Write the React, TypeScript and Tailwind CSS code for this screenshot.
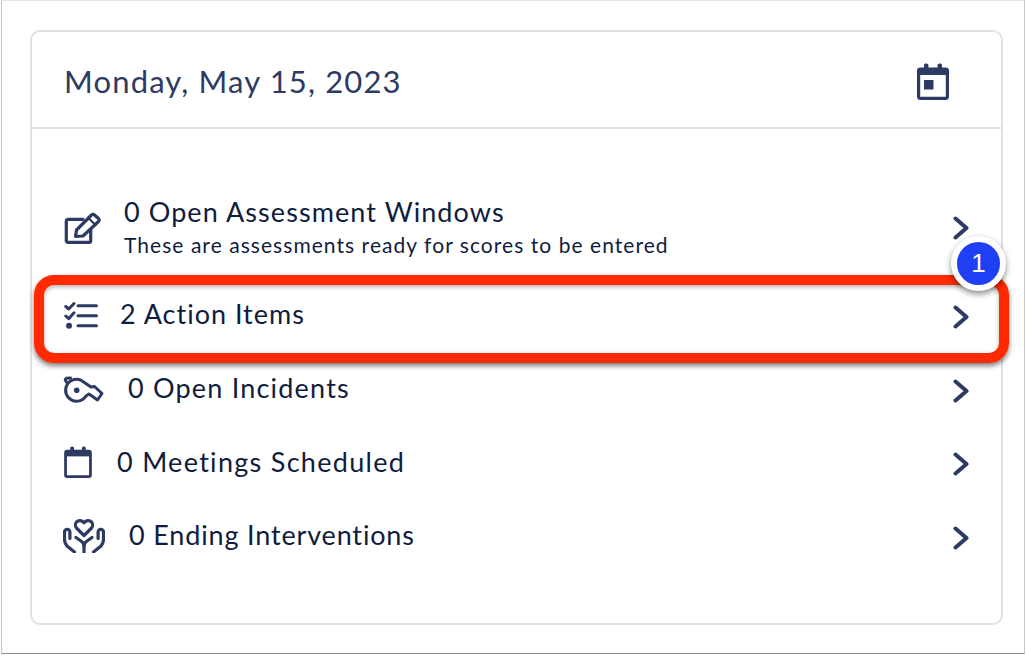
import React from 'react';

const NAVY = '#2d3a63';

function EditIcon() {
  return (
    <svg width="38" height="35" viewBox="7 5 38 35" fill="none" stroke={NAVY} strokeWidth="3.200" strokeLinejoin="round" strokeLinecap="round">
      <path d="M26 13.300H11a1.700 1.700 0 0 0-1.700 1.700V34.700a1.700 1.700 0 0 0 1.700 1.700H32a1.700 1.700 0 0 0 1.700-1.700V24" />
      <path d="M18.500 30.500 19.500 24 34.500 9a2 2 0 0 1 3 0L41.500 12.500a2 2 0 0 1 0 3L26 30z" />
      <path d="M31.500 12 38.500 19" strokeWidth="2.200" />
    </svg>
  );
}

function TasksIcon() {
  return (
    <svg width="34" height="28" viewBox="7 6 34 28" fill="none" stroke={NAVY} strokeWidth="3" strokeLinecap="round" strokeLinejoin="round">
      <path d="M8.800 11.500 11.700 14 17 8.500" />
      <path d="M8.800 21 11.700 23.700 17 17.800" />
      <circle cx="12" cy="30.700" r="3" fill={NAVY} stroke="none" />
      <path d="M21 10.700H39.500M21 20.700H39.500M21 30.700H39.500" />
    </svg>
  );
}

function WhistleIcon() {
  return (
    <svg width="42" height="30" viewBox="7 3 42 30" fill="none" stroke={NAVY} strokeWidth="3" strokeLinejoin="round" strokeLinecap="round">
      <path d="M30 25A11 11 0 1 1 25 9.200L35 16 38.500 15.500 46 22.500 41.500 29 33 23z" />
      <path d="M10.800 11.500 9.500 9.500a1.500 1.500 0 0 1 .8-2.200L14.500 7" />
      <circle cx="20.700" cy="19.300" r="2.800" fill={NAVY} stroke="none" />
    </svg>
  );
}

function CalendarIcon({ dot, width, height }: { dot?: boolean; width: number; height: number }) {
  return (
    <svg width={width} height={height} viewBox="0 0 32 37" fill="none">
      <rect x="1.600" y="6" width="28.800" height="29.400" rx="1.800" stroke={NAVY} strokeWidth="3.200" />
      <rect x="1.600" y="6" width="28.800" height="6" fill={NAVY} />
      <rect x="7" y="0.500" width="4.400" height="7" rx="1.800" fill={NAVY} />
      <rect x="20.600" y="0.500" width="4.400" height="7" rx="1.800" fill={NAVY} />
      {dot && <rect x="7" y="17" width="9.500" height="9.500" fill={NAVY} />}
    </svg>
  );
}

function HandsIcon() {
  return (
    <svg width="42" height="34" viewBox="7 6 42 34" fill="none" stroke={NAVY} strokeWidth="3.200" strokeLinecap="round" strokeLinejoin="round">
      <path d="M28 22.500 20.500 15a4.500 4.500 0 0 1 0-6c2-2 5.500-1.800 7.500.8 2-2.600 5.500-2.800 7.500-.8a4.500 4.500 0 0 1 0 6z" />
      <path d="M28 39.500V33c0-2.500-1.500-4-3-5l-5-3.500" />
      <path d="M28 33c0-2.500 1.500-4 3-5l5-3.500" />
      <path d="M18.500 39 11 33C9 31 8.500 29 8.500 26V19a2.700 2.700 0 0 1 5.400 0V25.500" />
      <path d="M37.500 39 45 33c2-2 2.500-4 2.500-7V19a2.700 2.700 0 0 0-5.400 0V25.500" />
    </svg>
  );
}

function Chevron({ lowered = true }: { lowered?: boolean }) {
  return (
    <svg className={lowered ? 'mt-1' : ''} width="16" height="24" viewBox="0 0 16 24" fill="none" stroke={NAVY} strokeWidth="4" strokeLinecap="round" strokeLinejoin="round">
      <path d="M2.500 2.500 13.500 12 2.500 21.500" />
    </svg>
  );
}

export default function App() {
  return (
    <div className="relative h-[656px] w-[1026px] overflow-hidden bg-white font-['Lato',sans-serif] text-[#101c3d]">
      {/* screenshot window edge */}
      <div className="ml-px h-[654px] w-[1024px] border-t border-r border-b border-l border-t-[#e6e6e6] border-r-[#c9c9c9] border-b-[#8a8a8a] border-l-[#c4c4c4] pt-[29px] pl-[28px]">
        <div className="h-[595px] w-[973px] rounded-[10px] border-2 border-[#e1e2e8]">
          <div className="flex h-[97px] items-center justify-between border-b-2 border-[#e1e2e8] pr-[52px] pl-[32px]">
            <h1 className="mt-[3px] text-[31px] tracking-[1.15px] text-[#2d3a63]">Monday, May 15, 2023</h1>
            <div className="mt-[4px] flex">
              <CalendarIcon dot width={32} height={37} />
            </div>
          </div>

          <div className="flex flex-col pt-[49px]">
            <div className="flex h-[100px] items-center justify-between pr-[32px] pl-[32px]">
              <div className="flex items-center gap-[22px]">
                <EditIcon />
                <div className="flex flex-col">
                  <span className="-mt-[3px] text-[27px] leading-[36px] tracking-[1.08px]">0 Open Assessment Windows</span>
                  <span className="text-[21px] leading-[30px] tracking-[1.05px]">These are assessments ready for scores to be entered</span>
                </div>
              </div>
              <Chevron lowered={false} />
            </div>
            <div className="flex h-[74px] items-center justify-between pr-[32px] pl-[32px]">
              <div className="flex items-center gap-[22px]">
                <TasksIcon />
                <span className="-mt-[2px] text-[27px] tracking-[1px]">2 Action Items</span>
              </div>
              <Chevron />
            </div>
            <div className="flex h-[73px] items-center justify-between pr-[32px] pl-[31px]">
              <div className="flex items-center gap-[23px]">
                <WhistleIcon />
                <span className="text-[27px] tracking-[1.2px]">0 Open Incidents</span>
              </div>
              <Chevron />
            </div>
            <div className="flex h-[74px] items-center justify-between pr-[32px] pl-[32px]">
              <div className="flex items-center gap-[25px]">
                <CalendarIcon width={28} height={32} />
                <span className="text-[27px] tracking-[1.3px]">0 Meetings Scheduled</span>
              </div>
              <Chevron />
            </div>
            <div className="flex h-[73px] items-center justify-between pr-[32px] pl-[31px]">
              <div className="flex items-center gap-[24px]">
                <HandsIcon />
                <span className="text-[27px] tracking-[0.84px]">0 Ending Interventions</span>
              </div>
              <Chevron />
            </div>
          </div>
        </div>
      </div>

      {/* annotation overlay */}
      <div className="absolute top-[275px] left-[34px] h-[88px] w-[975px] rounded-[20px] border-[10px] border-[#ff2a00] shadow-[0_3px_5px_rgba(0,0,0,0.5),inset_0_2px_4px_rgba(0,0,0,0.3)]" />
      <div className="absolute top-[236px] left-[951px] flex h-[55px] w-[55px] items-center justify-center rounded-full border-[6px] border-white bg-[#1f3ff5] font-['Liberation_Sans',sans-serif] text-[26px] text-white shadow-[0_3px_6px_rgba(0,0,0,0.45)]">
        1
      </div>
    </div>
  );
}
